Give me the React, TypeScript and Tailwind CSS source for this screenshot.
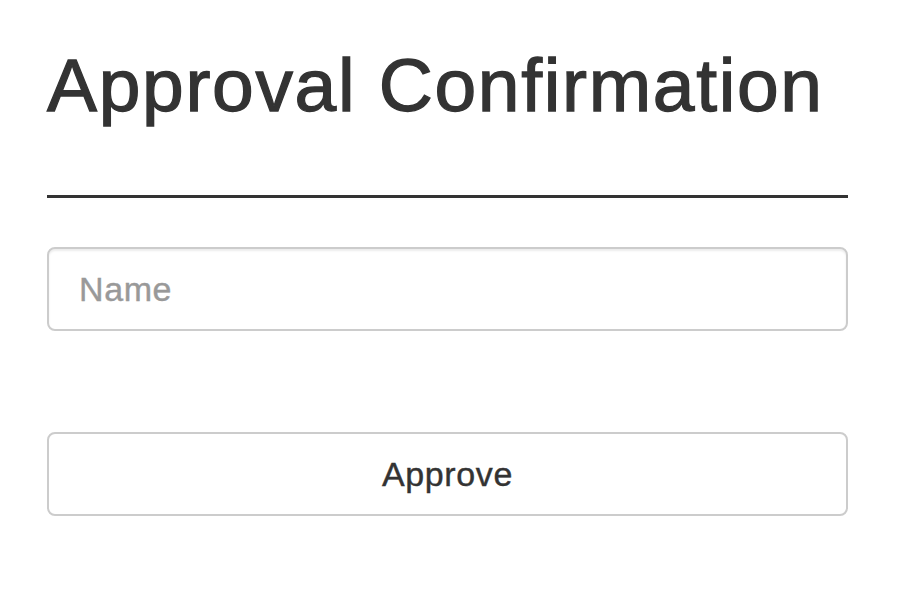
export default function App() {
  return (
    <div className="min-h-[611px] w-full bg-white" style={{ fontFamily: '"Liberation Sans", Arial, sans-serif' }}>
      <div className="pl-[47px] pr-[58px] pt-[48px]">
        <h1 className="m-0 text-[75px] leading-[75px] font-normal tracking-[1.65px] text-[#333333] [-webkit-text-stroke:1.3px_#333333]">
          Approval Confirmation
        </h1>
        <div className="mt-[72px] h-[3px] w-full bg-[#333333]" />
        <input
          type="text"
          placeholder="Name"
          className="mt-[49px] block h-[84px] w-full rounded-[8px] border-2 border-[#cccccc] bg-white pl-[30px] text-[34px] tracking-[0.6px] text-[#333333] outline-none placeholder:text-[#999999] shadow-[inset_0_2px_2px_rgba(0,0,0,0.075)] [-webkit-text-stroke:0.4px_#999999]"
        />
        <button
          type="button"
          className="mt-[101px] block h-[84px] w-full rounded-[8px] border-2 border-[#cccccc] bg-white text-[34px] tracking-[0.6px] text-[#333333] [-webkit-text-stroke:0.4px_#333333]"
        >
          Approve
        </button>
      </div>
    </div>
  );
}
